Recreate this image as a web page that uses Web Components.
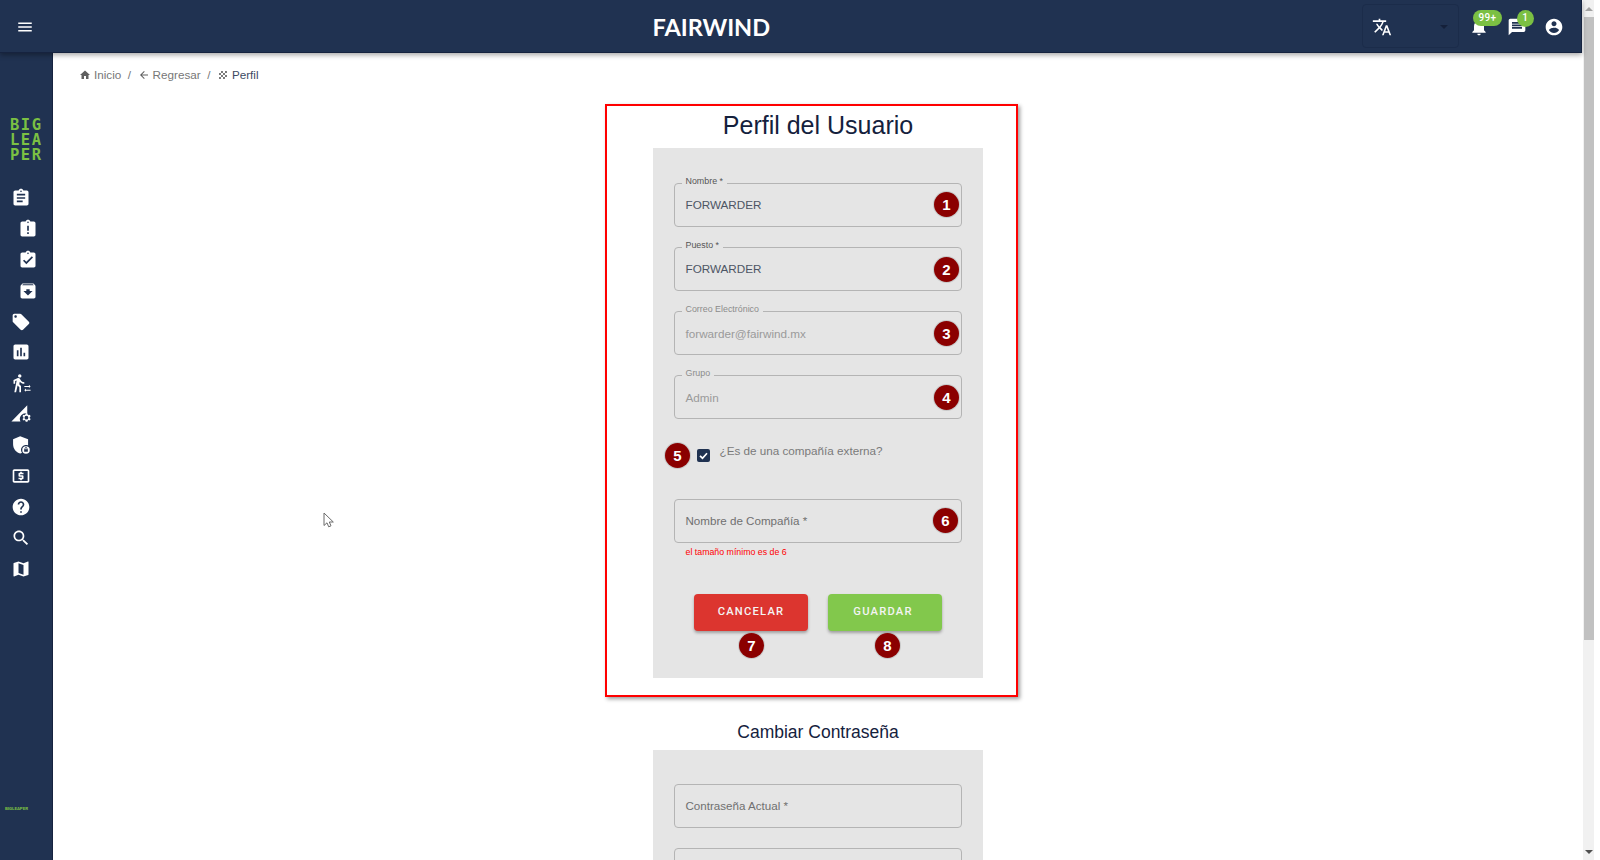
<!DOCTYPE html>
<html lang="es">
<head>
<meta charset="utf-8">
<title>Perfil</title>
<style>
  html, body { margin: 0; height: 100%; overflow: hidden; background: #fff; }
  body { font-family: "Liberation Sans", Arial, sans-serif; }
</style>
</head>
<body>
<fw-app>
  <fw-header slot="header"></fw-header>
  <fw-sidebar slot="sidebar"></fw-sidebar>

  <fw-breadcrumb></fw-breadcrumb>

  <fw-section heading="Perfil del Usuario" framed>
    <fw-field label="Nombre" required value="FORWARDER"><fw-marker n="1" style="right:3px;top:9px"></fw-marker></fw-field>
    <fw-field label="Puesto" required value="FORWARDER"><fw-marker n="2" style="right:3px;top:10px"></fw-marker></fw-field>
    <fw-field label="Correo Electrónico" value="forwarder@fairwind.mx" disabled><fw-marker n="3" style="right:3px;top:10px"></fw-marker></fw-field>
    <fw-field label="Grupo" value="Admin" disabled><fw-marker n="4" style="right:3px;top:10px"></fw-marker></fw-field>
    <fw-check label="¿Es de una compañía externa?"><fw-marker n="5" style="left:-9px;top:4px"></fw-marker></fw-check>
    <fw-field label="Nombre de Compañía" required error="el tamaño mínimo es de 6"><fw-marker n="6" style="right:4px;top:9px"></fw-marker></fw-field>
    <fw-actions>
      <fw-button color="#dc352f">CANCELAR<fw-marker n="7" style="left:45px;top:39px"></fw-marker></fw-button>
      <fw-button color="#82c84c" style="padding-right:4px">GUARDAR<fw-marker n="8" style="left:47px;top:39px"></fw-marker></fw-button>
    </fw-actions>
  </fw-section>

  <fw-section heading="Cambiar Contraseña" small>
    <fw-field label="Contraseña Actual" required></fw-field>
    <fw-field></fw-field>
  </fw-section>

  <fw-pointer></fw-pointer>
  <fw-scrollbar slot="scrollbar"></fw-scrollbar>
</fw-app>

<script>
  const ICONS = {
    menu: 'M3 18h18v-2H3v2zm0-5h18v-2H3v2zm0-7v2h18V6H3z',
    assignment: 'M19 3h-4.18C14.4 1.84 13.3 1 12 1c-1.3 0-2.4.84-2.82 2H5c-1.1 0-2 .9-2 2v14c0 1.1.9 2 2 2h14c1.1 0 2-.9 2-2V5c0-1.1-.9-2-2-2zm-7 0c.55 0 1 .45 1 1s-.45 1-1 1-1-.45-1-1 .45-1 1-1zm2 14H7v-2h7v2zm3-4H7v-2h10v2zm0-4H7V7h10v2z',
    late: 'M19 3h-4.18C14.4 1.84 13.3 1 12 1c-1.3 0-2.4.84-2.82 2H5c-1.1 0-2 .9-2 2v14c0 1.1.9 2 2 2h14c1.1 0 2-.9 2-2V5c0-1.1-.9-2-2-2zm-6 15h-2v-2h2v2zm0-4h-2V8h2v6zm-1-9c-.55 0-1-.45-1-1s.45-1 1-1 1 .45 1 1-.45 1-1 1z',
    done: 'M19 3h-4.18C14.4 1.84 13.3 1 12 1c-1.3 0-2.4.84-2.82 2H5c-1.1 0-2 .9-2 2v14c0 1.1.9 2 2 2h14c1.1 0 2-.9 2-2V5c0-1.1-.9-2-2-2zm-7 0c.55 0 1 .45 1 1s-.45 1-1 1-1-.45-1-1 .45-1 1-1zm-2 14l-4-4 1.41-1.41L10 14.17l6.59-6.59L18 9l-8 8z',
    archive: 'M20.54 5.23l-1.39-1.68C18.88 3.21 18.47 3 18 3H6c-.47 0-.88.21-1.16.55L3.46 5.23C3.17 5.57 3 6.02 3 6.5V19c0 1.1.9 2 2 2h14c1.1 0 2-.9 2-2V6.5c0-.48-.17-.93-.46-1.27zM12 17.5L6.5 12H10v-2h4v2h3.5L12 17.5zM5.12 5l.81-1h12l.94 1H5.12z',
    tag: 'M21.41 11.58l-9-9C12.05 2.22 11.55 2 11 2H4c-1.1 0-2 .9-2 2v7c0 .55.22 1.05.59 1.42l9 9c.36.36.86.58 1.41.58.55 0 1.05-.22 1.41-.59l7-7c.37-.36.59-.86.59-1.41 0-.55-.23-1.06-.59-1.42zM5.5 7C4.67 7 4 6.33 4 5.5S4.67 4 5.5 4 7 4.67 7 5.5 6.33 7 5.5 7z',
    chart: 'M19 3H5c-1.1 0-2 .9-2 2v14c0 1.1.9 2 2 2h14c1.1 0 2-.9 2-2V5c0-1.1-.9-2-2-2zM9 17H7v-7h2v7zm4 0h-2V7h2v10zm4 0h-2v-4h2v4z',
    walker: 'M10.5 5.5c1.1 0 2-.9 2-2s-.9-2-2-2-2 .9-2 2 .9 2 2 2zM6.8 8.9L4 23h2.1l1.8-8 2.1 2v6h2v-7.5l-2.1-2 .6-3C11.8 12 13.8 13 16 13v-2c-1.9 0-3.5-1-4.3-2.4l-1-1.6c-.4-.6-1-1-1.7-1-.3 0-.5.1-.8.1L3 8.3V13h2V9.6l1.8-.7zM16 15.5h5.500v-1.300l2 1.900-2 1.900v-1.300H16zM23.500 20h-5.500v-1.300l-2 1.900 2 1.900v-1.300h5.500z',
    signal: 'M19.500 1.500v9.800a7 7 0 0 0-8.200 9.700H0.500zM23.600 17.900l-1.100-.8c.1-.5.1-1 0-1.500l1.100-.8-1.100-1.900-1.200.5c-.4-.3-.8-.6-1.300-.8l-.2-1.300h-2.200l-.2 1.300c-.5.2-.9.5-1.300.8l-1.200-.5-1.100 1.900 1.100.8c-.1.5-.1 1 0 1.500l-1.100.8 1.100 1.900 1.200-.5c.4.3.8.6 1.300.8l.2 1.300h2.200l.2-1.300c.5-.2.9-.5 1.300-.8l1.200.5zM18.500 18.700a2.300 2.300 0 1 1 0-4.600 2.300 2.300 0 0 1 0 4.600z',
    shield: 'M11 1.500L2.500 5v6c0 5.200 3.600 10 8.500 11.200.8-.2 1.500-.5 2.200-.9-.7-.9-1.200-2.100-1.200-3.300 0-3.300 2.700-6 6-6 .9 0 1.800.2 2.500.6V5zM18 13.500a4.500 4.500 0 1 0 0 9 4.500 4.500 0 0 0 0-9zm2.200 6.500h-4.400v-2.800h.5v-.7c0-.9.800-1.700 1.700-1.700s1.700.8 1.700 1.700v.7h.5zm-1.300-2.800v-.7a.9.900 0 0 0-1.800 0v.7z',
    money: 'M11 17h2v-1h1c.55 0 1-.45 1-1v-3c0-.55-.45-1-1-1h-3v-1h4V8h-2V7h-2v1h-1c-.55 0-1 .45-1 1v3c0 .55.45 1 1 1h3v1H9v2h2v1zm9-13H4c-1.11 0-1.990.89-1.990 2L2 18c0 1.110.89 2 2 2h16c1.110 0 2-.89 2-2V6c0-1.110-.89-2-2-2zm0 14H4V6h16v12z',
    help: 'M12 2C6.480 2 2 6.480 2 12s4.480 10 10 10 10-4.480 10-10S17.520 2 12 2zm1 17h-2v-2h2v2zm2.070-7.750l-.9.920C13.450 12.900 13 13.500 13 15h-2v-.5c0-1.100.45-2.100 1.170-2.830l1.240-1.260c.37-.36.59-.86.59-1.410 0-1.100-.9-2-2-2s-2 .9-2 2H8c0-2.210 1.790-4 4-4s4 1.790 4 4c0 .88-.36 1.680-.93 2.250z',
    search: 'M15.500 14h-.79l-.28-.27C15.410 12.590 16 11.110 16 9.500 16 5.910 13.090 3 9.500 3S3 5.910 3 9.500 5.910 16 9.500 16c1.610 0 3.090-.59 4.230-1.570l.27.28v.79l5 4.990L20.490 19l-4.990-5zm-6 0C7.010 14 5 11.990 5 9.500S7.010 5 9.500 5 14 7.010 14 9.500 11.990 14 9.500 14z',
    map: 'M20.500 3l-.16.03L15 5.100 9 3 3.360 4.900c-.21.07-.36.25-.36.48V20.500c0 .28.22.5.5.5l.16-.03L9 18.900l6 2.100 5.640-1.900c.21-.07.36-.25.36-.48V3.500c0-.28-.22-.5-.5-.5zM15 19l-6-2.110V5l6 2.110V19z',
    translate: 'M12.870 15.070l-2.540-2.510.03-.03c1.740-1.940 2.980-4.170 3.710-6.530H17V4h-7V2H8v2H1v1.990h11.170C11.500 7.920 10.440 9.750 9 11.350 8.070 10.320 7.300 9.190 6.690 8h-2c.73 1.630 1.730 3.170 2.980 4.560l-5.090 5.020L4 19l5-5 3.110 3.110.76-2.040zM18.500 10h-2L12 22h2l1.120-3h4.750L21 22h2l-4.500-12zm-2.620 7l1.620-4.330L19.120 17h-3.240z',
    bell: 'M12 22c1.100 0 2-.9 2-2h-4c0 1.100.89 2 2 2zm6-6v-5c0-3.070-1.640-5.640-4.500-6.320V4c0-.83-.67-1.500-1.500-1.500s-1.500.67-1.500 1.500v.68C7.630 5.360 6 7.920 6 11v5l-2 2v1h16v-1l-2-2z',
    message: 'M20 2H4c-1.100 0-1.990.9-1.990 2L2 22l4-4h14c1.100 0 2-.9 2-2V4c0-1.100-.9-2-2-2zm-2 12H6v-2h12v2zm0-3H6V9h12v2zm0-3H6V6h12v2z',
    account: 'M12 2C6.480 2 2 6.480 2 12s4.480 10 10 10 10-4.480 10-10S17.520 2 12 2zm0 3c1.660 0 3 1.340 3 3s-1.340 3-3 3-3-1.340-3-3 1.340-3 3-3zm0 14.200c-2.500 0-4.710-1.280-6-3.220.03-1.990 4-3.080 6-3.080 1.990 0 5.970 1.090 6 3.080-1.290 1.940-3.500 3.220-6 3.220z',
    home: 'M10 20v-6h4v6h5v-8h3L12 3 2 12h3v8z',
    back: 'M20 11H7.830l5.590-5.590L12 4l-8 8 8 8 1.410-1.410L7.830 13H20v-2z',
    grain: 'M10 12c-1.100 0-2 .9-2 2s.9 2 2 2 2-.9 2-2-.9-2-2-2zM6 8c-1.100 0-2 .9-2 2s.9 2 2 2 2-.9 2-2-.9-2-2-2zm0 8c-1.100 0-2 .9-2 2s.9 2 2 2 2-.9 2-2-.9-2-2-2zm12-8c1.100 0 2-.9 2-2s-.9-2-2-2-2 .9-2 2 .9 2 2 2zm-4 8c-1.100 0-2 .9-2 2s.9 2 2 2 2-.9 2-2-.9-2-2-2zm4-4c-1.100 0-2 .9-2 2s.9 2 2 2 2-.9 2-2-.9-2-2-2zm-4-4c-1.100 0-2 .9-2 2s.9 2 2 2 2-.9 2-2-.9-2-2-2zm-4-4c-1.100 0-2 .9-2 2s.9 2 2 2 2-.9 2-2-.9-2-2-2z'
  };

  class FwIcon extends HTMLElement {
    connectedCallback() {
      const size = this.getAttribute('size') || 20;
      const root = this.attachShadow({ mode: 'open' });
      root.innerHTML = `
        <style>
          :host { display: block; width: ${size}px; height: ${size}px; flex: none; }
          svg { display: block; width: 100%; height: 100%; fill: currentColor; }
        </style>
        <svg viewBox="0 0 24 24"><path d="${ICONS[this.getAttribute('name')]}"/></svg>`;
    }
  }
  customElements.define('fw-icon', FwIcon);

  class FwApp extends HTMLElement {
    constructor() {
      super();
      this.attachShadow({ mode: 'open' }).innerHTML = `
        <style>
          :host { display: grid; grid-template-columns: 1583px 11px 6px; grid-template-rows: 53px 807px; height: 860px; overflow: hidden; }
          .head { grid-column: 1; grid-row: 1; z-index: 2; }
          .side { grid-column: 1; grid-row: 2; display: flex; min-height: 0; }
          .bar { grid-column: 2; grid-row: 1 / 3; }
          main { position: relative; flex: 1; min-width: 0; overflow: hidden; display: flex; flex-direction: column; align-items: center; }
        </style>
        <div class="head"><slot name="header"></slot></div>
        <div class="side">
          <slot name="sidebar"></slot>
          <main><slot></slot></main>
        </div>
        <div class="bar"><slot name="scrollbar"></slot></div>`;
    }
  }
  customElements.define('fw-app', FwApp);

  class FwHeader extends HTMLElement {
    constructor() {
      super();
      this.attachShadow({ mode: 'open' }).innerHTML = `
        <style>
          :host { display: flex; align-items: center; height: 53px; width: 1582px; box-sizing: border-box; position: relative;
                  background: #203251; color: #fff; border-bottom: 1px solid #16233f; border-right: 1px solid #16233f;
                  box-shadow: 0 2px 5px rgba(0,0,0,.35); }
          .menu { margin: 1px 0 0 15.500px; }
          h1 { margin: 1px 0 0 619px; font: 700 23.500px Lato, "Open Sans", sans-serif; line-height: 52px; }
          .tools { margin-left: auto; display: flex; align-items: center; }
          .lang { width: 97px; height: 44px; box-sizing: border-box; border: 1px solid #1b2c4a; border-radius: 4px; display: flex; align-items: center; padding: 2px 10px 0 9px; justify-content: space-between; margin-right: 10px; }
          .caret { width: 0; height: 0; border: 4px solid transparent; border-top: 4px solid #14203a; border-bottom: 0; }
          .tool { position: relative; top: 1px; }
          .num { position: absolute; background: #7bc043; color: #fff; font: 500 10px Roboto, sans-serif; text-align: center; }
          .n99 { left: 4px; top: -7px; width: 29px; height: 16px; line-height: 15px; border-radius: 8px; letter-spacing: .4px; }
          .n1 { left: 9.500px; top: -7.500px; width: 17px; height: 17px; line-height: 16px; border-radius: 50%; }
        </style>
        <fw-icon class="menu" name="menu" size="18"></fw-icon>
        <h1>FAIRWIND</h1>
        <div class="tools">
          <div class="lang"><fw-icon name="translate" size="20"></fw-icon><span class="caret"></span></div>
          <div class="tool" style="margin-right:18px"><fw-icon name="bell" size="20"></fw-icon><span class="num n99">99+</span></div>
          <div class="tool" style="margin-right:17px"><fw-icon name="message" size="20"></fw-icon><span class="num n1">1</span></div>
          <div class="tool" style="margin-right:17px"><fw-icon name="account" size="20"></fw-icon></div>
        </div>`;
    }
  }
  customElements.define('fw-header', FwHeader);

  class FwSidebar extends HTMLElement {
    constructor() {
      super();
      const items = [
        ['assignment', 0], ['late', 1], ['done', 1], ['archive', 1], ['tag', 0], ['chart', 0],
        ['walker', 0], ['signal', 0], ['shield', 0], ['money', 0], ['help', 0], ['search', 0], ['map', 0]
      ];
      this.attachShadow({ mode: 'open' }).innerHTML = `
        <style>
          :host { display: flex; flex-direction: column; flex: none; width: 53px; box-sizing: border-box; background: #203251; color: #fff; border-right: 1px solid #16233f; }
          .logo { margin: 65px 0 0 10px; font: 700 15.500px/15px "DejaVu Sans Mono", monospace; color: #7bc043; letter-spacing: 1.500px; }
          nav { margin-top: 25px; display: flex; flex-direction: column; gap: 10.900px; padding-left: 11px; }
          fw-icon.sub { margin-left: 7px; }
          small { margin-top: auto; margin-bottom: 49px; padding-left: 5px; font: 700 4.400px Roboto, sans-serif; color: #7bc043; }
        </style>
        <div class="logo">BIG<br>LEA<br>PER</div>
        <nav>${items.map(([n, sub]) => `<fw-icon name="${n}" size="20"${sub ? ' class="sub"' : ''}></fw-icon>`).join('')}</nav>
        <small>BIGLEAPER</small>`;
    }
  }
  customElements.define('fw-sidebar', FwSidebar);

  class FwBreadcrumb extends HTMLElement {
    constructor() {
      super();
      this.attachShadow({ mode: 'open' }).innerHTML = `
        <style>
          :host { display: flex; flex: none; align-items: center; align-self: stretch; height: 16px; margin: 13px 0 0 26px; font: 11.700px "Liberation Sans", Arial, sans-serif; color: #777; }
          fw-icon { margin-right: 3px; color: #5f5f5f; position: relative; top: 1px; }
          i { font-style: normal; margin: 0 6.500px; }
          b { font-weight: 400; color: #3c4a63; }
        </style>
        <fw-icon name="home" size="12"></fw-icon><span>Inicio</span><i>/</i>
        <fw-icon name="back" size="12"></fw-icon><span>Regresar</span><i>/</i>
        <fw-icon name="grain" size="12"></fw-icon><b>Perfil</b>`;
    }
  }
  customElements.define('fw-breadcrumb', FwBreadcrumb);

  class FwSection extends HTMLElement {
    connectedCallback() {
      const small = this.hasAttribute('small');
      const root = this.attachShadow({ mode: 'open' });
      root.innerHTML = `
        <style>
          :host { display: block; position: relative; width: 330px; flex: none; margin-top: ${small ? 43 : 28}px; color: #14213d; }
          h2 { margin: 0; font: 400 ${small ? 17.5 : 25}px/${small ? 22 : 30}px "Liberation Sans", Arial, sans-serif; text-align: center; height: ${small ? 29 : 38}px; }
          .panel { background: #e5e5e5; padding: ${small ? 34 : 35}px 21px 0; height: ${small ? 'auto' : '530px'}; box-sizing: border-box; display: flex; flex-direction: column; gap: 20px; }
          .frame { position: absolute; left: -48px; right: -35px; top: -6px; bottom: -19px; border: 2px solid #f00; box-shadow: 2px 2px 4px rgba(0,0,0,.4); pointer-events: none; }
        </style>
        <h2>${this.getAttribute('heading')}</h2>
        <div class="panel"><slot></slot></div>
        ${this.hasAttribute('framed') ? '<div class="frame"></div>' : ''}`;
    }
  }
  customElements.define('fw-section', FwSection);

  class FwField extends HTMLElement {
    connectedCallback() {
      const label = (this.getAttribute('label') || '') + (this.hasAttribute('required') ? ' *' : '');
      const value = this.getAttribute('value');
      const error = this.getAttribute('error');
      const off = this.hasAttribute('disabled');
      const root = this.attachShadow({ mode: 'open' });
      root.innerHTML = `
        <style>
          :host { display: block; position: relative; font-family: "Liberation Sans", Arial, sans-serif; }
          .box { height: 44px; box-sizing: border-box; border: 1px solid #b4b4b4; border-radius: 4px; padding: 0 10.500px; display: flex; align-items: center; position: relative; font-size: 11.700px; color: ${off ? '#9a9a9a' : '#4d5564'}; }
          .float { position: absolute; left: 6.500px; top: -8px; padding: 0 4px; background: #e5e5e5; font-size: 8.900px; line-height: 11px; color: ${off ? '#8c8c8c' : '#555'}; }
          .val { margin-top: ${off ? 0 : -2}px; }
          .ph { color: #707070; margin-top: -2px; font-size: 11.600px; }
          .err { font-size: 8.800px; line-height: 11px; padding: 4px 0 0 11.500px; color: #f00; }
        </style>
        <div class="box">
          ${value ? `<span class="float">${label}</span><span class="val">${value}</span>` : `<span class="ph">${label}</span>`}
        </div>
        ${error ? `<div class="err">${error}</div>` : ''}
        <slot></slot>`;
    }
  }
  customElements.define('fw-field', FwField);

  class FwCheck extends HTMLElement {
    connectedCallback() {
      const root = this.attachShadow({ mode: 'open' });
      root.innerHTML = `
        <style>
          :host { display: block; position: relative; height: 40px; font: 11.700px "Liberation Sans", Arial, sans-serif; color: #7a7a7a; }
          .row { display: flex; align-items: flex-start; padding-left: 23px; }
          .box { width: 13px; height: 13px; margin: 10px 9.500px 0 0; border-radius: 2px; background: #203251; display: block; }
          svg { display: block; width: 13px; height: 13px; fill: none; stroke: #fff; stroke-width: 1.700; }
          span { line-height: 14px; margin-top: 5px; }
        </style>
        <div class="row">
          <div class="box"><svg viewBox="0 0 13 13"><path d="M3 6.800l2.500 2.400L10 4.300"/></svg></div>
          <span>${this.getAttribute('label')}</span>
        </div>
        <slot></slot>`;
    }
  }
  customElements.define('fw-check', FwCheck);

  class FwActions extends HTMLElement {
    constructor() {
      super();
      this.attachShadow({ mode: 'open' }).innerHTML = `
        <style>:host { display: flex; gap: 20px; padding-left: 20px; margin-top: 16px; }</style>
        <slot></slot>`;
    }
  }
  customElements.define('fw-actions', FwActions);

  class FwButton extends HTMLElement {
    connectedCallback() {
      const root = this.attachShadow({ mode: 'open' });
      root.innerHTML = `
        <style>
          :host { display: flex; align-items: center; justify-content: center; position: relative; box-sizing: border-box; width: 114px; height: 37px; border-radius: 4px;
                  background: ${this.getAttribute('color')}; color: #f4f4f4; font: 500 11.200px Roboto, sans-serif; letter-spacing: 1.200px;
                  box-shadow: 0 2px 3px rgba(0,0,0,.3); }
          .t { margin-top: -2px; }
        </style>
        <span class="t"><slot></slot></span>`;
    }
  }
  customElements.define('fw-button', FwButton);

  class FwMarker extends HTMLElement {
    connectedCallback() {
      const root = this.attachShadow({ mode: 'open' });
      root.innerHTML = `
        <style>
          :host { position: absolute; display: flex; align-items: center; justify-content: center; width: 25px; height: 25px; box-sizing: border-box; border-radius: 50%;
                  background: #8b0000; color: #fff; font: 700 15px "Liberation Sans", Arial, sans-serif; letter-spacing: 0; box-shadow: 0 0 0 1px rgba(120,120,120,.25); }
        </style>
        ${this.getAttribute('n')}`;
    }
  }
  customElements.define('fw-marker', FwMarker);

  class FwPointer extends HTMLElement {
    constructor() {
      super();
      this.attachShadow({ mode: 'open' }).innerHTML = `
        <style>
          :host { position: absolute; left: 270px; top: 459px; width: 12px; height: 18px; }
          svg { display: block; overflow: visible; }
        </style>
        <svg width="12" height="18" viewBox="0 0 12 18"><path d="M1 1v12.500l3-2.700 1.700 4 2.300-1-1.700-3.800h4z" fill="#fff" stroke="#6b6b6b" stroke-width="1"/></svg>`;
    }
  }
  customElements.define('fw-pointer', FwPointer);

  class FwScrollbar extends HTMLElement {
    constructor() {
      super();
      this.attachShadow({ mode: 'open' }).innerHTML = `
        <style>
          :host { display: flex; flex-direction: column; height: 860px; background: #f1f1f1; box-sizing: border-box; padding-left: 1px; }
          .cap { height: 17px; display: flex; align-items: center; justify-content: center; flex: none; }
          .up { width: 0; height: 0; border: 4px solid transparent; border-bottom: 4px solid #a3a3a3; border-top: 0; }
          .down { width: 0; height: 0; border: 4px solid transparent; border-top: 4px solid #505050; border-bottom: 0; }
          .thumb { height: 623px; background: #c1c1c1; flex: none; }
          .rest { flex: 1; }
        </style>
        <div class="cap"><span class="up"></span></div>
        <div class="thumb"></div>
        <div class="rest"></div>
        <div class="cap"><span class="down"></span></div>`;
    }
  }
  customElements.define('fw-scrollbar', FwScrollbar);
</script>
</body>
</html>
